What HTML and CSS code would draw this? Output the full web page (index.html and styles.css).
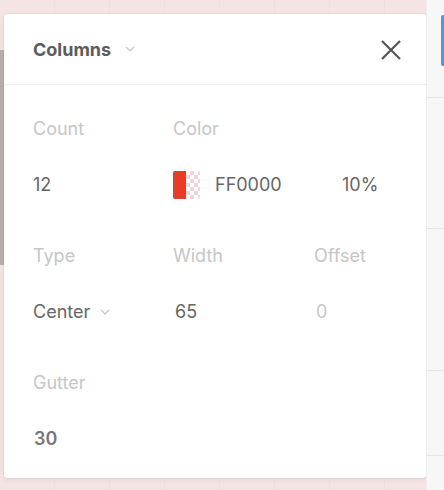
FILE: index.html
```html
<!doctype html>
<html lang="en">
<head>
	<meta charset="UTF-8">
	<title>Columns</title>
	<link rel="stylesheet" href="styles.css">
</head>
<body>
<div class="stage">
	<div class="edge"><div class="edge_bar"></div></div>

	<div class="panel">
		<div class="panel_head">
			<div class="panel_title">
				Columns
				<svg class="chev" width="10" height="6" viewBox="0 0 10 6"><polyline points="1,1 5,5 9,1" fill="none" stroke="#c4c4c4" stroke-width="1.2"/></svg>
			</div>
			<svg class="close" width="22" height="22" viewBox="0 0 22 22"><path d="M2 2L20 20M20 2L2 20" stroke="#555" stroke-width="2.2" fill="none"/></svg>
		</div>

		<div class="panel_body">
			<div class="field">
				<div class="label">Count</div>
				<div class="value">12</div>
			</div>
			<div class="field wide">
				<div class="label">Color</div>
				<div class="value color">
					<span class="swatch"><span class="swatch_fill"></span><span class="swatch_alpha"></span></span>
					<span class="hex">FF0000</span>
					<span>10%</span>
				</div>
			</div>

			<div class="field">
				<div class="label">Type</div>
				<div class="value">
					Center
					<svg class="chev" width="10" height="6" viewBox="0 0 10 6"><polyline points="1,1 5,5 9,1" fill="none" stroke="#c4c4c4" stroke-width="1.2"/></svg>
				</div>
			</div>
			<div class="field">
				<div class="label">Width</div>
				<div class="value num">65</div>
			</div>
			<div class="field">
				<div class="label">Offset</div>
				<div class="value num muted">0</div>
			</div>

			<div class="field">
				<div class="label">Gutter</div>
				<div class="value strong">30</div>
			</div>
		</div>
	</div>

	<div class="side">
		<div class="side_btn"></div>
		<div class="side_row r1"></div>
		<div class="side_row r2"></div>
		<div class="side_row r3"></div>
		<div class="side_row r4"></div>
	</div>
</div>
</body>
</html>
```

FILE: styles.css
```css
html,body{margin:0;height:100%;}
body{background:#f5e4e4;font-family:Inter,"Noto Sans",sans-serif;overflow:hidden;}
.stage{display:flex;height:490px;background:repeating-linear-gradient(90deg,#f5e4e4 0,#f5e4e4 54px,#f1dfdf 54px,#f1dfdf 55px);}

.edge{width:4px;flex:none;}
.edge_bar{margin-top:50px;height:215px;background:#b9afaf;}

.panel{width:422px;height:464px;margin-top:14px;flex:none;background:#fff;border-radius:3px;box-shadow:0 0 2px rgba(0,0,0,.12),0 2px 6px rgba(0,0,0,.06);box-sizing:border-box;}
.panel_head{height:71px;display:flex;align-items:center;justify-content:space-between;padding:0 24px 0 29px;border-bottom:1px solid #ececec;box-sizing:border-box;}
.panel_title{font-size:18px;font-weight:700;color:#5c5c5c;display:flex;align-items:center;gap:14px;}
.close{margin-top:1px;}

.panel_body{display:grid;grid-template-columns:140px 141px 1fr;row-gap:47px;padding:32px 0 0 29px;}
.field{display:flex;flex-direction:column;gap:32px;}
.field.wide{grid-column:span 2;}
.label{height:24px;line-height:24px;font-size:18px;color:#c6c6c6;}
.value{height:24px;line-height:24px;font-size:18px;color:#666;display:flex;align-items:center;gap:10px;}
.value.num{padding-left:2px;}
.value.muted{color:#c8c8c8;}
.value.strong{color:#777;font-weight:600;padding-left:1px;}

.value.color{gap:0;}
.swatch{display:flex;width:27px;height:28px;margin-right:15px;}
.swatch_fill{width:13px;background:#ea3a28;border-radius:2px 0 0 2px;}
.swatch_alpha{width:14px;background-color:#fff;background-image:linear-gradient(45deg,#f3d3d3 25%,transparent 25%,transparent 75%,#f3d3d3 75%),linear-gradient(45deg,#f3d3d3 25%,transparent 25%,transparent 75%,#f3d3d3 75%);background-size:8px 8px;background-position:0 0,4px 4px;border-radius:0 2px 2px 0;}
.hex{width:127px;}

.side{flex:1;background:#f7f7f7;position:relative;border-left:1px solid #ededed;}
.side_btn{position:absolute;right:0;top:15px;width:3px;height:51px;background:#3f9beb;border-radius:2px 0 0 2px;}
.side_row{height:1px;background:#e4e4e4;position:absolute;left:0;right:0;}
.r1{top:97px;}
.r2{top:228px;}
.r3{top:370px;}
.r4{top:455px;}
```
